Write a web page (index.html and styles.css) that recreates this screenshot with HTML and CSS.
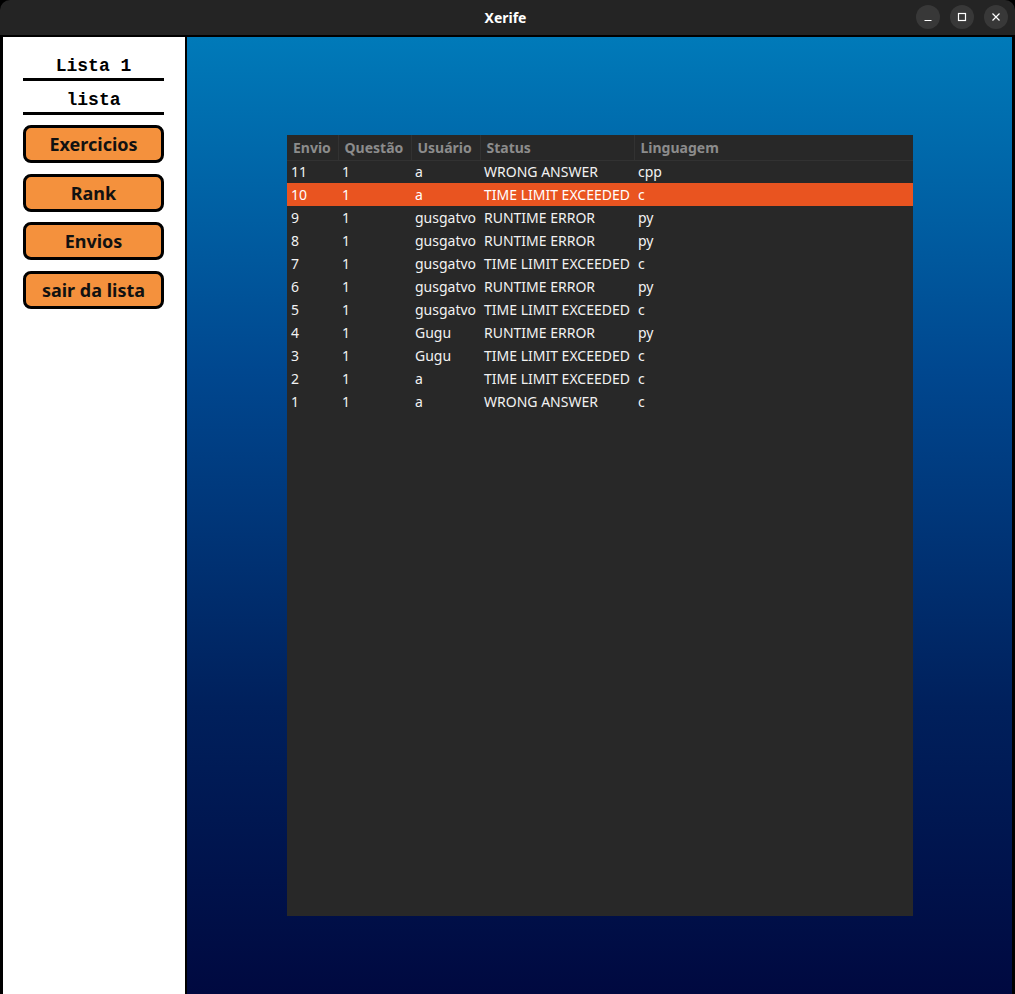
FILE: index.html
```html
<!DOCTYPE html>
<html lang="pt">
<head>
<meta charset="utf-8">
<title>Xerife</title>
<link rel="stylesheet" href="styles.css">
</head>
<body>
<div class="window">
  <header class="titlebar">
    <span class="title">Xerife</span>
    <div class="controls">
      <span class="ctl"><svg width="12" height="12" viewBox="0 0 12 12"><path d="M2.5 9.5h7" stroke="#fff" stroke-width="1.2"/></svg></span>
      <span class="ctl"><svg width="12" height="12" viewBox="0 0 12 12"><rect x="2.5" y="2.5" width="7" height="7" fill="none" stroke="#fff" stroke-width="1.2"/></svg></span>
      <span class="ctl"><svg width="12" height="12" viewBox="0 0 12 12"><path d="M2.5 2.5l7 7M9.5 2.5l-7 7" stroke="#fff" stroke-width="1.2"/></svg></span>
    </div>
  </header>
  <div class="app">
    <aside class="sidebar">
      <div class="heading">Lista 1</div>
      <div class="heading">lista</div>
      <button class="btn">Exercicios</button>
      <button class="btn">Rank</button>
      <button class="btn">Envios</button>
      <button class="btn">sair da lista</button>
    </aside>
    <main class="main">
      <div class="table-wrap">
        <table class="subs">
          <thead>
            <tr><th class="c1">Envio</th><th class="c2">Questão</th><th class="c3">Usuário</th><th class="c4">Status</th><th class="c5">Linguagem</th></tr>
          </thead>
          <tbody>
            <tr><td>11</td><td>1</td><td>a</td><td>WRONG ANSWER</td><td>cpp</td></tr>
            <tr class="sel"><td>10</td><td>1</td><td>a</td><td>TIME LIMIT EXCEEDED</td><td>c</td></tr>
            <tr><td>9</td><td>1</td><td>gusgatvo</td><td>RUNTIME ERROR</td><td>py</td></tr>
            <tr><td>8</td><td>1</td><td>gusgatvo</td><td>RUNTIME ERROR</td><td>py</td></tr>
            <tr><td>7</td><td>1</td><td>gusgatvo</td><td>TIME LIMIT EXCEEDED</td><td>c</td></tr>
            <tr><td>6</td><td>1</td><td>gusgatvo</td><td>RUNTIME ERROR</td><td>py</td></tr>
            <tr><td>5</td><td>1</td><td>gusgatvo</td><td>TIME LIMIT EXCEEDED</td><td>c</td></tr>
            <tr><td>4</td><td>1</td><td>Gugu</td><td>RUNTIME ERROR</td><td>py</td></tr>
            <tr><td>3</td><td>1</td><td>Gugu</td><td>TIME LIMIT EXCEEDED</td><td>c</td></tr>
            <tr><td>2</td><td>1</td><td>a</td><td>TIME LIMIT EXCEEDED</td><td>c</td></tr>
            <tr><td>1</td><td>1</td><td>a</td><td>WRONG ANSWER</td><td>c</td></tr>
          </tbody>
        </table>
      </div>
    </main>
  </div>
</div>
</body>
</html>
```
FILE: styles.css
```css
* { box-sizing: border-box; }
html, body { margin: 0; padding: 0; height: 100%; background: #000; }
body { font-family: "Noto Sans", "DejaVu Sans", sans-serif; }

.window {
  width: 1015px;
  height: 994px;
  display: flex;
  flex-direction: column;
  background: #000;
  border-radius: 10px 10px 0 0;
  overflow: hidden;
}

.titlebar {
  height: 35px;
  flex: none;
  background: #242424;
  position: relative;
  display: flex;
  align-items: center;
  justify-content: center;
}
.title {
  color: #fff;
  font-weight: bold;
  font-size: 14px;
  margin-left: -4px;
}
.controls {
  position: absolute;
  right: 7px;
  top: 5px;
  display: flex;
  gap: 10px;
}
.ctl {
  width: 24px;
  height: 24px;
  border-radius: 50%;
  background: #383838;
  display: flex;
  align-items: center;
  justify-content: center;
}

.app {
  flex: 1;
  display: flex;
  border-left: 3px solid #000;
  border-right: 3px solid #000;
  border-top: 2px solid #000;
  min-height: 0;
}

.sidebar {
  width: 184px;
  flex: none;
  background: #fff;
  border-right: 2px solid #000;
  padding: 19px 0 0 20px;
  display: flex;
  flex-direction: column;
  align-items: flex-start;
}
.heading {
  width: 141px;
  text-align: center;
  font-family: "Liberation Mono", "DejaVu Sans Mono", monospace;
  font-weight: bold;
  font-size: 18px;
  line-height: 20px;
  color: #000;
  padding-bottom: 2px;
  border-bottom: 3px solid #000;
  margin-bottom: 9px;
}
.heading + .heading { margin-bottom: 10px; }
.btn {
  width: 141px;
  height: 38px;
  background: #f4913d;
  border: 3px solid #000;
  border-radius: 8px;
  font-family: "Noto Sans", "DejaVu Sans", sans-serif;
  font-weight: bold;
  font-size: 18px;
  color: #111;
  padding: 0;
  margin-bottom: 10.7px;
}

.main {
  flex: 1;
  background: linear-gradient(to bottom, #007ab9 0%, #00478f 35%, #00205c 70%, #000940 100%);
  padding: 98px 0 0 100px;
}
.table-wrap {
  width: 626px;
  height: 781px;
  background: #282828;
}
.subs {
  border-collapse: collapse;
  font-size: 14px;
  color: #f2f2f2;
}
.subs th {
  height: 25px;
  text-align: left;
  color: #8c8c8c;
  font-weight: bold;
  padding: 0 0 0 6px;
  border-right: 1px solid #323232;
  border-bottom: 1px solid #323232;
}
.subs th.c5 { border-right: none; }
.subs .c1 { width: 51px; }
.subs .c2 { width: 73px; }
.subs .c3 { width: 69px; }
.subs .c4 { width: 154px; }
.subs .c5 { width: 279px; }
.subs td {
  height: 23px;
  padding: 0 0 0 4px;
  white-space: nowrap;
}
.subs tr.sel td { background: #e95420; color: #fff; }
```
